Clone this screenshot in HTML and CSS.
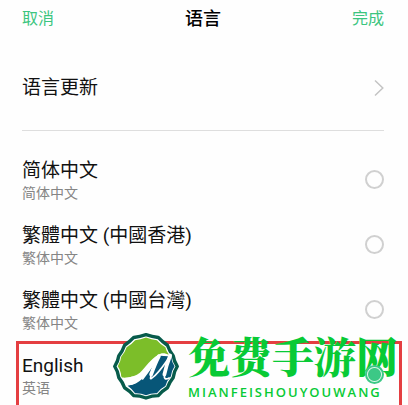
FILE: index.html
```html
<!DOCTYPE html>
<html lang="zh-CN">
<head>
<meta charset="utf-8">
<meta name="viewport" content="width=device-width, initial-scale=1">
<title>语言</title>
<link rel="stylesheet" href="styles.css">
</head>
<body>
<main class="screen">
  <header class="bar">
    <button class="bar-action" type="button">取消</button>
    <h1 class="bar-title">语言</h1>
    <button class="bar-action bar-action-end" type="button">完成</button>
  </header>
  <a class="update" href="#update">
    <span>语言更新</span>
    <svg class="chevron" viewBox="0 0 10 18" aria-hidden="true"><path d="M1 1.5 8.8 9 1 16.5"/></svg>
  </a>
  <form class="languages">
    <label class="language">
      <span class="names"><span class="name">简体中文</span><span class="note">简体中文</span></span>
      <input class="radio" type="radio" name="language">
    </label>
    <label class="language" lang="zh-TW">
      <span class="names"><span class="name">繁體中文 (中國香港)</span><span class="note" lang="zh-CN">繁体中文</span></span>
      <input class="radio" type="radio" name="language">
    </label>
    <label class="language" lang="zh-TW">
      <span class="names"><span class="name">繁體中文 (中國台灣)</span><span class="note" lang="zh-CN">繁体中文</span></span>
      <input class="radio" type="radio" name="language">
    </label>
    <div class="marked">
      <label class="language">
        <span class="names"><span class="name">English</span><span class="note">英语</span></span>
        <input class="radio" type="radio" name="language" checked>
      </label>
      <div class="brand">
        <svg class="logo" viewBox="24 22 200 200" aria-hidden="true">
          <path class="logo-rim" d="M88 38Q106 36 124 30Q142 36 160 38Q172 51 187 61Q193 78 204 92Q206 108 216 123Q206 138 204 156Q193 169 187 186Q172 195 160 209Q142 209 124 216Q106 209 88 209Q76 195 61 186Q55 169 44 156Q42 138 32 123Q42 108 44 92Q55 79 61 61Q76 51 88 38Z"/>
          <path class="logo-green" d="M92 46Q108 45 124 38Q140 45 156 46Q167 59 181 67Q184 80 192 90C178 82 168 84 160 89C138 102 124 124 106 142C94 151 76 158 53 156Q50 150 50 143Q48 132 41 123Q50 108 51 95Q62 83 67 67Q81 59 92 46Z"/>
          <path class="logo-blue" d="M70 180C98 176 112 156 130 130L166 92L198 94Q200 112 208 123Q198 138 197 153Q185 165 181 181Q167 188 156 202Q140 201 124 208Q108 201 92 202Q84 190 70 180Z"/>
          <path class="logo-swash" d="M54 157C72 160 84 149 96 153Q101 157 95 162C118 148 140 108 166 88L160 101C138 124 116 171 82 178Q66 176 54 157Z"/>
          <path class="logo-stem" d="M162 93Q152 112 139 147M195 91Q184 119 178 147"/>
          <path class="logo-hair" d="M160 97C144 119 128 142 114 160M139 150Q134 164 142 157C162 143 179 115 197 90M178 149Q176 166 192 157"/>
        </svg>
        <div class="brand-text">
          <span class="brand-name">免费手游网</span>
          <span class="brand-latin">MIANFEISHOUYOUWANG</span>
        </div>
      </div>
    </div>
  </form>
</main>
</body>
</html>
```
FILE: styles.css
```css
* {
  box-sizing: border-box;
}

body {
  margin: 0;
  background: #fefefe;
  color: #111;
  font-family: Roboto, "Noto Sans CJK SC", sans-serif;
}

.screen {
  height: 100vh;
  overflow: hidden;
}

.bar {
  display: grid;
  grid-template-columns: 1fr auto 1fr;
  align-items: center;
  height: 37px;
  padding: 0 24px 0 22px;
}

.bar-action {
  justify-self: start;
  padding: 0;
  border: 0;
  background: none;
  color: #3cc57e;
  font: 16px/24px Roboto, "Noto Sans CJK SC", sans-serif;
}

.bar-action-end {
  justify-self: end;
}

.bar-title {
  margin: 0;
  color: #000;
  font-size: 18px;
  font-weight: 500;
  line-height: 24px;
}

.update {
  display: flex;
  align-items: center;
  justify-content: space-between;
  height: 94px;
  margin: 0 24px 0 22px;
  padding-top: 8px;
  border-bottom: 1px solid #dedede;
  color: inherit;
  font-size: 19px;
  line-height: 24px;
  text-decoration: none;
}

.chevron {
  width: 10px;
  height: 18px;
  fill: none;
  stroke: #c4c4c4;
  stroke-width: 1.5;
}

.languages {
  padding-top: 16px;
}

.language {
  display: flex;
  align-items: center;
  justify-content: space-between;
  height: 65px;
  padding: 0 24px 0 22px;
}

.language:lang(zh-TW) .name {
  font-family: Roboto, "Noto Sans CJK TC", sans-serif;
}

.names {
  display: flex;
  flex-direction: column;
  padding-top: 2px;
}

.name {
  font-size: 19px;
  line-height: 24px;
}

.note {
  color: #858585;
  font-size: 14px;
  line-height: 20px;
}

.radio {
  appearance: none;
  width: 19px;
  height: 19px;
  margin: 0;
  border: 2px solid #d0d0d0;
  border-radius: 50%;
  background: #fefefe;
}

.radio:checked {
  position: relative;
  z-index: 2;
  border-color: #3cc886;
  background: radial-gradient(circle, #3cc886 6px, #e4f9ee 7px);
}

.marked {
  position: relative;
}

.marked::before {
  content: "";
  position: absolute;
  inset: -1px 6px -8px 16px;
  border: 3px solid #e43e41;
}

.brand {
  position: absolute;
  top: -10px;
  left: 112px;
  display: flex;
  gap: 8px;
}

.logo {
  width: 68px;
  height: 68px;
}

.logo-rim {
  fill: #fff;
  stroke: #075b4b;
  stroke-width: 10;
  stroke-linejoin: round;
}

.logo-green {
  fill: #7cbe29;
}

.logo-blue {
  fill: #075678;
}

.logo-swash {
  fill: #fff;
}

.logo-stem,
.logo-hair {
  fill: none;
  stroke: #fff;
  stroke-linecap: round;
  stroke-width: 11;
}

.logo-hair {
  stroke-width: 5;
}

.brand-text {
  display: flex;
  flex-direction: column;
  gap: 6px;
  color: #08ca35;
  white-space: nowrap;
}

.brand-name {
  font: 900 42px/46px "Noto Serif CJK SC", "Noto Sans CJK SC", serif;
}

.brand-latin {
  font: 600 13px/16px "Open Sans", sans-serif;
  letter-spacing: 2px;
}
```
